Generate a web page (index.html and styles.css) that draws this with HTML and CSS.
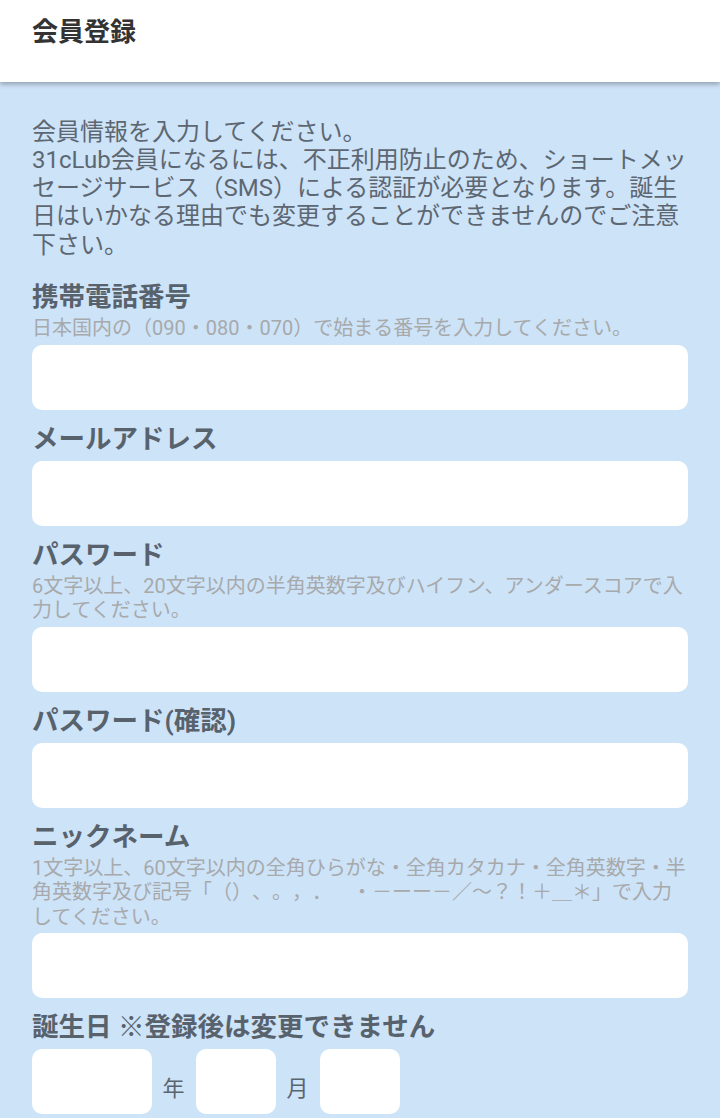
FILE: index.html
```html
<!DOCTYPE html>
<html lang="ja">
<head>
<meta charset="utf-8">
<meta name="viewport" content="width=device-width, initial-scale=1">
<title>会員登録</title>
<link rel="stylesheet" href="styles.css">
</head>
<body>
<header class="appbar">
  <h1 class="appbar-title">会員登録</h1>
</header>
<main class="signup">
  <p class="intro">会員情報を入力してください。<br>31cLub会員になるには、不正利用防止のため、ショートメッセージサービス（SMS）による認証が必要となります。誕生日はいかなる理由でも変更することができませんのでご注意下さい。</p>
  <form class="fields">
    <div class="field">
      <label class="field-label" for="tel">携帯電話番号</label>
      <p class="field-hint">日本国内の（090・080・070）で始まる番号を入力してください。</p>
      <input class="field-input" id="tel" type="tel">
    </div>
    <div class="field">
      <label class="field-label" for="mail">メールアドレス</label>
      <input class="field-input" id="mail" type="email">
    </div>
    <div class="field">
      <label class="field-label" for="pw">パスワード</label>
      <p class="field-hint">6文字以上、20文字以内の半角英数字及びハイフン、アンダースコアで入力してください。</p>
      <input class="field-input" id="pw" type="password">
    </div>
    <div class="field">
      <label class="field-label" for="pw2">パスワード(確認)</label>
      <input class="field-input" id="pw2" type="password">
    </div>
    <div class="field">
      <label class="field-label" for="nick">ニックネーム</label>
      <p class="field-hint">1文字以上、60文字以内の全角ひらがな・全角カタカナ・全角英数字・半角英数字及び記号「（）、。，．　・－ーー－／～？！＋＿＊」で入力してください。</p>
      <input class="field-input" id="nick" type="text">
    </div>
    <div class="field">
      <label class="field-label" for="year">誕生日 ※登録後は変更できません</label>
      <div class="date-row">
        <input class="field-input date-year" id="year" type="text">
        <span class="date-unit">年</span>
        <input class="field-input date-small" type="text">
        <span class="date-unit">月</span>
        <input class="field-input date-small" type="text">
      </div>
    </div>
  </form>
</main>
</body>
</html>
```

FILE: styles.css
```css
html, body {
  margin: 0;
  padding: 0;
}

body {
  background: #cde3f8;
  font-family: Roboto, "Noto Sans CJK JP", sans-serif;
  color: #5b6570;
  text-spacing-trim: space-all;
}

.appbar {
  position: relative;
  z-index: 1;
  box-sizing: border-box;
  height: 82px;
  padding: 15.5px 32px 0;
  background: #ffffff;
  box-shadow: 0 2px 5px rgba(0, 0, 0, 0.32);
}

.appbar-title {
  margin: 0;
  font-size: 26px;
  line-height: 32px;
  font-weight: 700;
  color: #333333;
}

.signup {
  padding: 35.5px 32px 40px;
}

.intro {
  margin: 0 -5px 22.5px 0;
  font-size: 24px;
  line-height: 28.3px;
  color: #5d6772;
}

.fields {
  display: flex;
  flex-direction: column;
  gap: 12.5px;
  margin: 0;
}

.field {
  display: flex;
  flex-direction: column;
}

.field-label {
  display: block;
  margin-bottom: 3px;
  font-size: 26.5px;
  line-height: 32px;
  font-weight: 700;
  color: #58626c;
}

.field-hint {
  margin: 0 -3px 1px 0;
  font-size: 20px;
  line-height: 24.4px;
  color: #a7a9ab;
}

.field-input {
  display: block;
  box-sizing: border-box;
  width: 100%;
  height: 65.5px;
  margin: 3px 0 0;
  padding: 0 16px;
  border: none;
  border-radius: 10px;
  background: #ffffff;
  font: inherit;
  font-size: 20px;
  color: #333333;
  outline: none;
}

.date-row {
  display: flex;
  align-items: flex-end;
  margin-top: 3px;
}

.date-row .field-input {
  margin-top: 0;
}

.date-year {
  flex: 0 0 119.5px;
}

.date-small {
  flex: 0 0 80px;
}

.date-unit {
  margin: 0 11px 14.5px;
  font-size: 22px;
  line-height: 22px;
  color: #5b6570;
}
```
